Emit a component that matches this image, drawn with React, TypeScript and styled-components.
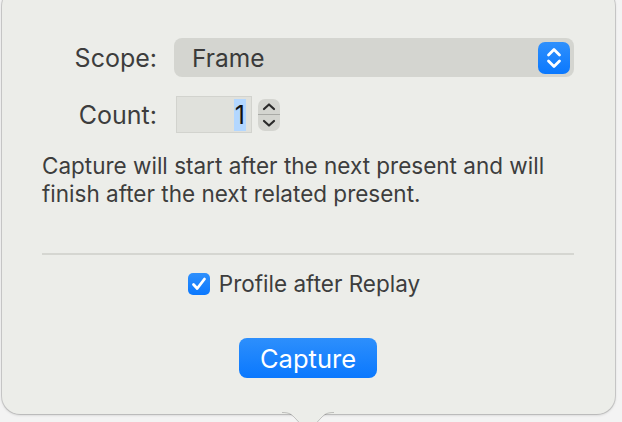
import React from "react";
import styled, { createGlobalStyle } from "styled-components";

const Global = createGlobalStyle`
  html, body { margin: 0; padding: 0; }
  body {
    width: 622px;
    height: 422px;
    overflow: hidden;
    background: #f3f3f3;
    font-family: Inter, "Noto Sans", "Liberation Sans", sans-serif;
    -webkit-font-smoothing: antialiased;
  }
`;

const Stage = styled.div`
  position: relative;
  width: 622px;
  height: 422px;
  overflow: hidden;
`;

const Popover = styled.div`
  position: relative;
  box-sizing: border-box;
  margin: -12px 0 0 2px;
  width: 613px;
  height: 426px;
  border-radius: 18px;
  background: #ecede9;
  box-shadow: 0 0 0 1px rgba(0, 0, 0, 0.13), 0 1px 3px rgba(0, 0, 0, 0.18);
  padding: 50px 41px 0 40px;
  color: #3b3b3b;
`;

const Arrow = styled.svg`
  position: absolute;
  left: 280px;
  bottom: -10px;
`;

const Form = styled.div`
  display: grid;
  grid-template-columns: 115px 1fr;
  column-gap: 17px;
  row-gap: 19px;
  align-items: center;
`;

const Label = styled.div`
  text-align: right;
  font-size: 25px;
  color: #3d3d3d;
`;

const Select = styled.div`
  height: 39px;
  border-radius: 8px;
  background: #d4d5d0;
  display: flex;
  align-items: center;
  justify-content: space-between;
  padding: 0 4px 0 18px;
  font-size: 24.5px;
  color: #3a3a3a;
`;

const BlueKnob = styled.div`
  width: 32px;
  height: 32px;
  border-radius: 7px;
  background: linear-gradient(#2f90fc, #0a78fe);
  display: flex;
  align-items: center;
  justify-content: center;
`;

const CountWrap = styled.div`
  display: flex;
  align-items: center;
  gap: 6px;
  margin-left: 2px;
`;

const CountInput = styled.div`
  box-sizing: border-box;
  width: 76px;
  height: 37px;
  background: #e0e1dc;
  border: 1px solid #d2d3ce;
  display: flex;
  align-items: center;
  justify-content: flex-end;
  padding-right: 5px;
  font-size: 25px;
  color: #111;
`;

const Selected = styled.span`
  background: #b3d7ff;
  padding: 0 1px;
  line-height: 32px;
`;

const Stepper = styled.div`
  width: 22px;
  height: 32px;
  border-radius: 7px;
  background: #d4d5d0;
  display: flex;
  flex-direction: column;
  align-items: center;
  justify-content: space-between;
  padding: 3px 0;
  box-sizing: border-box;
  position: relative;
  &::after {
    content: "";
    position: absolute;
    left: 0;
    right: 0;
    top: 15px;
    height: 1.5px;
    background: #a9aaa6;
  }
`;

const Description = styled.p`
  margin: 19px 0 0 0;
  font-size: 22.5px;
  line-height: 28px;
  color: #3d3d3d;
  white-space: nowrap;
`;

const Divider = styled.hr`
  margin: 45px 0 0 0;
  border: none;
  height: 2px;
  background: #d5d6d1;
`;

const CheckRow = styled.div`
  margin-top: 15px;
  display: flex;
  align-items: center;
  justify-content: center;
  gap: 9px;
  padding-right: 8px;
  font-size: 22.5px;
  color: #3d3d3d;
`;

const Checkbox = styled.div`
  width: 22px;
  height: 22px;
  border-radius: 5px;
  background: linear-gradient(#2f90fc, #0a78fe);
  display: flex;
  align-items: center;
  justify-content: center;
`;

const ButtonRow = styled.div`
  margin-top: 41px;
  display: flex;
  justify-content: center;
`;

const Button = styled.button`
  width: 138px;
  height: 40px;
  border: none;
  border-radius: 8px;
  background: linear-gradient(#2d8ffc, #0a78fe);
  color: #fff;
  font-family: inherit;
  font-size: 25.5px;
  padding: 0;
`;

const Chevrons = ({ color, w, h }: { color: string; w: number; h: number }) => (
  <svg width={w} height={h} viewBox="0 0 16 24" fill="none">
    <path d="M2.5 9 L8 3.5 L13.5 9" stroke={color} strokeWidth="2.8" strokeLinecap="round" strokeLinejoin="round" />
    <path d="M2.5 15 L8 20.5 L13.5 15" stroke={color} strokeWidth="2.8" strokeLinecap="round" strokeLinejoin="round" />
  </svg>
);

const Chevron = ({ up }: { up?: boolean }) => (
  <svg width="14" height="9" viewBox="0 0 14 9" fill="none">
    <path
      d={up ? "M2 7 L7 2.5 L12 7" : "M2 2 L7 6.5 L12 2"}
      stroke="#2a2a2a"
      strokeWidth="2.2"
      strokeLinecap="round"
      strokeLinejoin="round"
    />
  </svg>
);

export default function App() {
  return (
    <Stage>
      <Global />
      <Popover>
        <Form>
          <Label>Scope:</Label>
          <Select>
            <span>Frame</span>
            <BlueKnob>
              <Chevrons color="#fff" w={16} h={24} />
            </BlueKnob>
          </Select>
          <Label>Count:</Label>
          <CountWrap>
            <CountInput>
              <Selected>1</Selected>
            </CountInput>
            <Stepper>
              <Chevron up />
              <Chevron />
            </Stepper>
          </CountWrap>
        </Form>
        <Description>
          Capture will start after the next present and will
          <br />
          finish after the next related present.
        </Description>
        <Divider />
        <CheckRow>
          <Checkbox>
            <svg width="18" height="18" viewBox="0 0 18 18" fill="none">
              <path d="M3.5 9.5 L7.2 13.5 L14.5 4" stroke="#fff" strokeWidth="2.8" strokeLinecap="round" strokeLinejoin="round" />
            </svg>
          </Checkbox>
          <span>Profile after Replay</span>
        </CheckRow>
        <ButtonRow>
          <Button>Capture</Button>
        </ButtonRow>
        <Arrow width="52" height="12" viewBox="0 0 52 12">
          <path d="M0 0 C7 0 9 2 13 6 L26 20 L39 6 C43 2 45 0 52 0 Z" fill="#ecede9" />
          <path d="M0 0.5 C7 0.5 9 2 13 6 L26 20 L39 6 C43 2 45 0.5 52 0.5" stroke="rgba(0,0,0,0.2)" fill="none" />
        </Arrow>
      </Popover>
    </Stage>
  );
}
